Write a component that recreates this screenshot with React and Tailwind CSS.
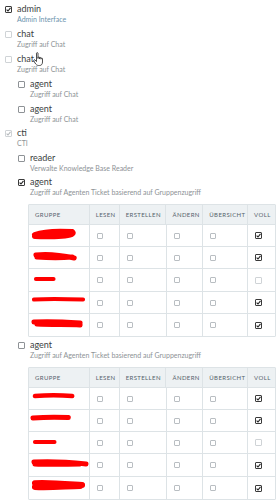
import React from "react";

const FONT = { fontFamily: '"Lato", "Noto Sans", sans-serif' };

function Box({ checked = false, faint = false }) {
  return (
    <span
      className={
        "inline-flex h-[7px] w-[7px] shrink-0 items-center justify-center rounded-[1px] border bg-white " +
        (faint ? "border-[#cfd3d6]" : checked ? "border-[#3a3a3a]" : "border-[#8e9296]")
      }
    >
      {checked && (
        <svg width="5" height="5" viewBox="0 0 5 5">
          <path d="M0.6 2.6 L2 4 L4.5 0.8" fill="none" stroke={faint ? "#b5b9bc" : "#222"} strokeWidth="1.1" />
        </svg>
      )}
    </span>
  );
}

function Item({ label, desc, checked, faint, descBlue, children, cursor, className = "" }) {
  return (
    <div className={"flex flex-col " + className}>
      <div className="flex items-center gap-[5px] h-[10px]">
        <Box checked={checked} faint={faint} />
        <span className="relative text-[9px] leading-[10px] text-[#3c3f42]">
          {label}
          {cursor && (
            <svg className="absolute left-[16px] top-[-2px]" width="12" height="15" viewBox="0 0 12 15">
              <path
                d="M3.5 1.2 C3.5 0.5 5 0.5 5 1.2 L5 6.5 L5 5.5 C5 4.8 6.5 4.8 6.5 5.5 L6.5 6.8 L6.5 6 C6.5 5.3 8 5.3 8 6 L8 7.2 L8 6.6 C8 5.9 9.5 5.9 9.5 6.6 L9.5 10 C9.5 12 8.5 13.5 6.5 13.5 L5.5 13.5 C4 13.5 3 12.5 2 11 L0.8 8.8 C0.4 8 1.4 7.3 2 8 L3.5 9.5 Z"
                fill="#fff"
                stroke="#222"
                strokeWidth="0.8"
                strokeLinejoin="round"
              />
            </svg>
          )}
        </span>
      </div>
      <div
        className={
          "pl-[12px] text-[7px] leading-[10px] " + (descBlue ? "text-[#6c93ad]" : "text-[#8d9296]")
        }
      >
        {desc}
      </div>
      {children}
    </div>
  );
}

const COLS = [
  { name: "GRUPPE", w: "w-[61px]" },
  { name: "LESEN", w: "w-[30px]" },
  { name: "ERSTELLEN", w: "w-[47px]" },
  { name: "ÄNDERN", w: "w-[37px]" },
  { name: "ÜBERSICHT", w: "w-[45px]" },
  { name: "VOLL", w: "w-[27px]" },
];

function Scribble({ d, sw = 6 }) {
  return (
    <svg width="61" height="22" viewBox="0 0 61 22" className="block">
      <path d={d} fill="none" stroke="#ff0000" strokeWidth={sw} strokeLinecap="round" strokeLinejoin="round" />
    </svg>
  );
}

function Table({ rows, rowH }) {
  return (
    <div className="mt-[7px] ml-[10px] w-[248px] border border-[#dde3e6] rounded-[1px]">
      <div className="flex h-[20px] bg-[#edf1f3] border-b border-[#dde3e6]">
        {COLS.map((c, i) => (
          <div
            key={c.name}
            className={
              c.w +
              " flex items-center pl-[6px] text-[6px] tracking-[0.4px] text-[#56636c] " +
              (i < COLS.length - 1 ? "border-r border-[#dde3e6]" : "")
            }
          >
            {c.name}
          </div>
        ))}
      </div>
      {rows.map((r, ri) => (
        <div
          key={ri}
          className={"flex " + rowH[ri] + (ri < rows.length - 1 ? " border-b border-[#dde3e6]" : "")}
        >
          <div className="w-[61px] border-r border-[#dde3e6] flex items-center">
            <Scribble d={r.d} sw={r.sw} />
          </div>
          {COLS.slice(1).map((c, i) => (
            <div
              key={c.name}
              className={
                c.w +
                " flex items-center pl-[7px] " +
                (i < COLS.length - 2 ? "border-r border-[#dde3e6]" : "")
              }
            >
              {i === 4 ? (
                r.voll ? <Box checked /> : <Box faint />
              ) : (
                <span className="inline-block h-[6px] w-[6px] border border-[#b9bec2] rounded-[1px]" />
              )}
            </div>
          ))}
        </div>
      ))}
    </div>
  );
}

const rows1 = [
  { d: "M6 10 C14 7 28 6 44 7 C46 9 40 11 30 11 C20 12 12 11 6 11", sw: 6, voll: true },
  { d: "M7 8 C16 7 32 8 46 11 M8 10 C20 11 34 11 44 10", sw: 5, voll: true },
  { d: "M7 10 L25 10", sw: 4, voll: false },
  { d: "M5 7.5 C20 6.5 40 7 55 7.5", sw: 4, voll: true },
  { d: "M5 8 C20 7 38 8 52 9 M8 10 C24 11 40 10 52 11", sw: 5, voll: true },
];

const rows2 = [
  { d: "M6 8 C18 7 32 7 44 8", sw: 4.5, voll: true },
  { d: "M4 8 C16 7 30 7 40 7.5", sw: 5, voll: true },
  { d: "M6 10 L26 10", sw: 4, voll: false },
  { d: "M5 8 C20 7 40 8 58 10 M6 10 C22 11 40 10 52 10", sw: 5, voll: true },
  { d: "M6 6 C20 5 40 7 54 8 M6 10 C22 11 40 9 52 9", sw: 6, voll: true },
];

export default function App() {
  return (
    <div className="w-[277px] bg-white pt-[4px] pl-[5px] flex flex-col gap-[5px]" style={FONT}>
      <Item label="admin" desc="Admin Interface" checked descBlue />
      <Item label="chat" desc="Zugriff auf Chat" faint />
      <Item label="chat" desc="Zugriff auf Chat" faint cursor>
        <div className="pl-[13px] mt-[5px] flex flex-col gap-[5px]">
          <Item label="agent" desc="Zugriff auf Chat" />
          <Item label="agent" desc="Zugriff auf Chat" />
        </div>
      </Item>
      <Item label="cti" desc="CTI" checked faint className="-mt-[1px]">
        <div className="pl-[13px] mt-[5px] flex flex-col">
          <Item label="reader" desc="Verwalte Knowledge Base Reader" />
          <Item
            label="agent"
            desc="Zugriff auf Agenten Ticket basierend auf Gruppenzugriff"
            checked
            className="mt-[4px]"
          >
            <Table rows={rows1} rowH={["h-[22px]", "h-[22px]", "h-[23px]", "h-[22px]", "h-[22px]"]} />
          </Item>
          <Item
            label="agent"
            desc="Zugriff auf Agenten Ticket basierend auf Gruppenzugriff"
            className="mt-[3px]"
          >
            <Table rows={rows2} rowH={["h-[22px]", "h-[22px]", "h-[22px]", "h-[23px]", "h-[22px]"]} />
          </Item>
        </div>
      </Item>
    </div>
  );
}
